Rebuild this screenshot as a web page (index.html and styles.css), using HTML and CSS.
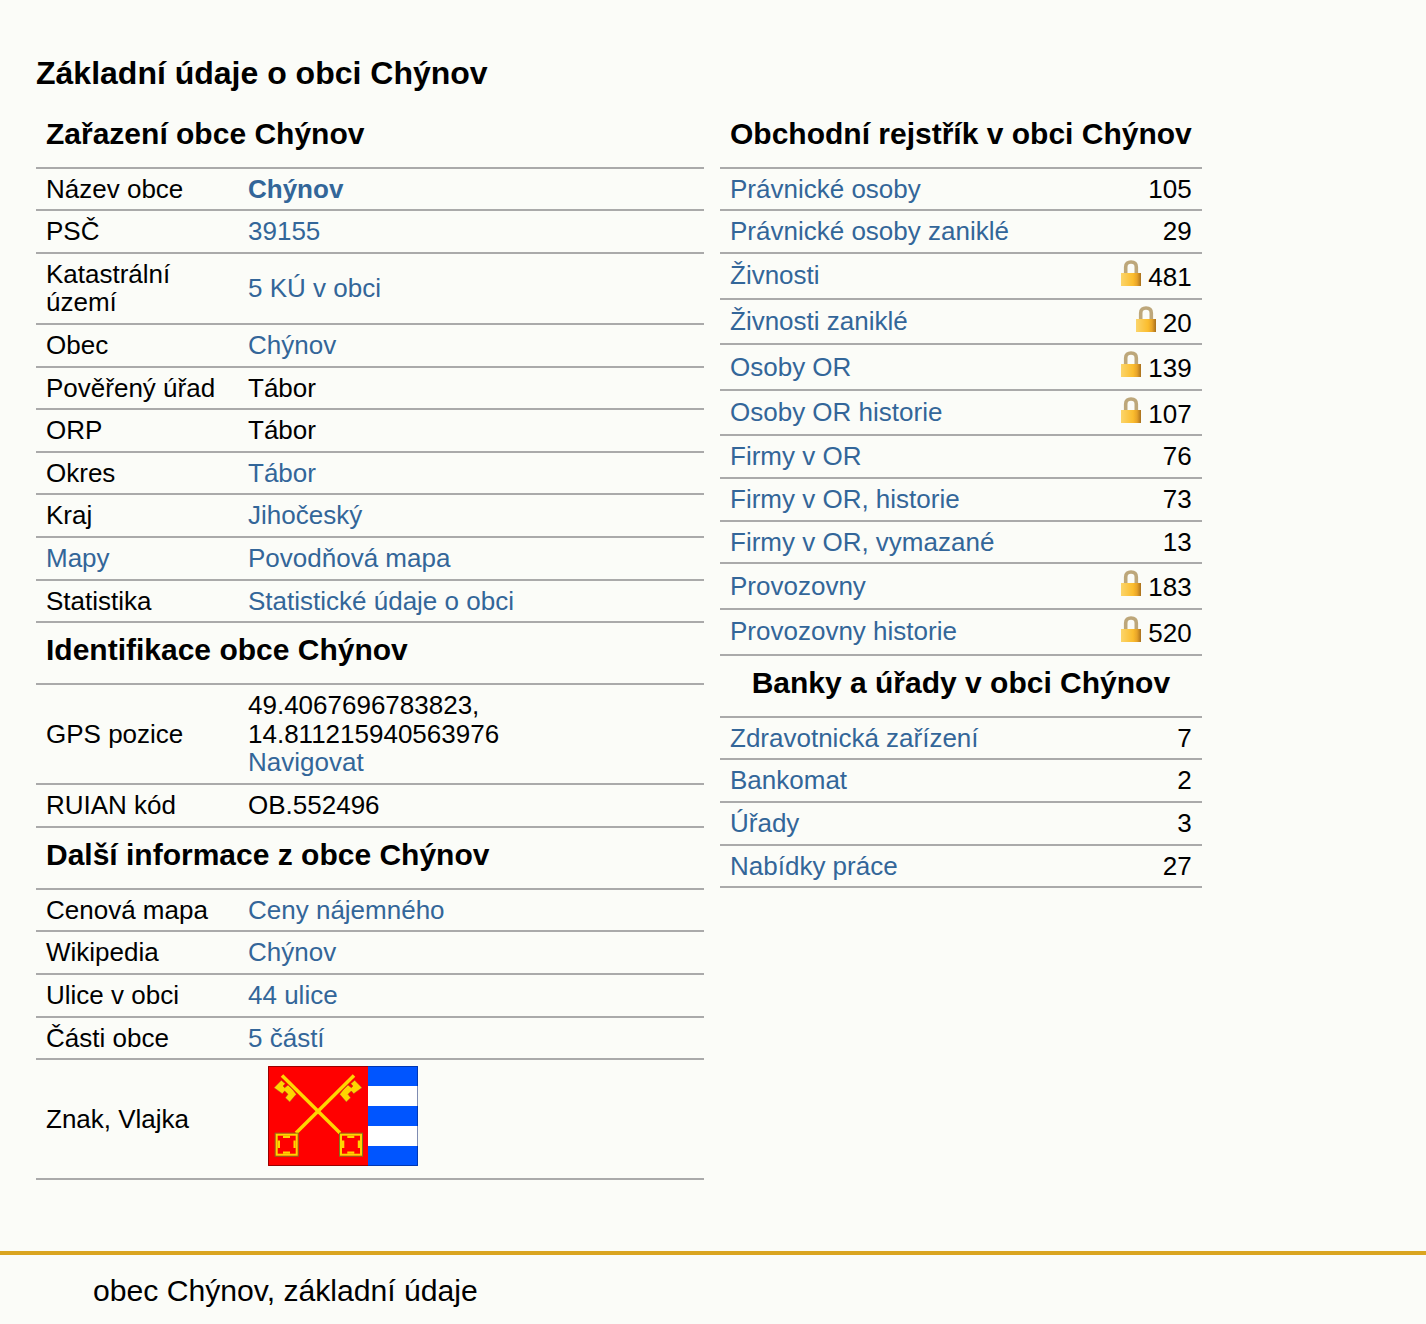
FILE: index.html
```html
<!DOCTYPE html>
<html lang="cs">
<head>
<meta charset="utf-8">
<title>Základní údaje o obci Chýnov</title>
<link rel="stylesheet" href="styles.css">
</head>
<body>
<main class="content">
<h1 class="page-title">Základní údaje o obci Chýnov</h1>
<div class="columns">
<table class="info left">
<tbody>
<tr class="head"><th colspan="2"><h2>Zařazení obce Chýnov</h2></th></tr>
<tr><td class="label">Název obce</td><td><a href="#"><b>Chýnov</b></a></td></tr>
<tr><td class="label">PSČ</td><td><a href="#">39155</a></td></tr>
<tr><td class="label">Katastrální území</td><td><a href="#">5 KÚ v obci</a></td></tr>
<tr><td class="label">Obec</td><td><a href="#">Chýnov</a></td></tr>
<tr><td class="label">Pověřený úřad</td><td>Tábor</td></tr>
<tr><td class="label">ORP</td><td>Tábor</td></tr>
<tr><td class="label">Okres</td><td><a href="#">Tábor</a></td></tr>
<tr><td class="label">Kraj</td><td><a href="#">Jihočeský</a></td></tr>
<tr><td class="label"><a href="#">Mapy</a></td><td><a href="#">Povodňová mapa</a></td></tr>
<tr><td class="label">Statistika</td><td><a href="#">Statistické údaje o obci</a></td></tr>
<tr class="head"><th colspan="2"><h2>Identifikace obce Chýnov</h2></th></tr>
<tr><td class="label">GPS pozice</td><td>49.4067696783823,<br>14.811215940563976<br><a href="#">Navigovat</a></td></tr>
<tr><td class="label">RUIAN kód</td><td>OB.552496</td></tr>
<tr class="head"><th colspan="2"><h2>Další informace z obce Chýnov</h2></th></tr>
<tr><td class="label">Cenová mapa</td><td><a href="#">Ceny nájemného</a></td></tr>
<tr><td class="label">Wikipedia</td><td><a href="#">Chýnov</a></td></tr>
<tr><td class="label">Ulice v obci</td><td><a href="#">44 ulice</a></td></tr>
<tr><td class="label">Části obce</td><td><a href="#">5 částí</a></td></tr>
<tr><td class="label">Znak, Vlajka</td><td class="symbols">
<svg class="symbol" width="150" height="100" viewBox="0 0 150 100" role="img" aria-label="Znak a vlajka">
<defs>
<path id="key-bit" d="M6 21.700 L13.300 14.300 L17.300 17.700 L15 20 L16.700 21.700 L20 19 L25 24 L28.300 28.300 L21.700 36 L17.300 31.700 L20 28.300 L16.700 25 L14.300 27.700Z"/>
<g id="key-bow">
<rect x="7.200" y="67.200" width="23" height="23" fill="none" stroke="#7c7a1c" stroke-width="1"/>
<rect x="8.700" y="68.700" width="20" height="20" fill="none" stroke="#ffd500" stroke-width="2"/>
<path d="M15 69.700 H22 V72 H15Z M15 85.500 H22 V87.700 H15Z M9.700 74.500 H12 V82 H9.700Z M25.500 74.500 H27.700 V82 H25.500Z" fill="#ffd500"/>
</g>
</defs>
<rect width="100" height="100" fill="#ff0000"/>
<rect x="100" width="50" height="100" fill="#0055ff"/>
<rect x="100" y="20" width="50" height="20" fill="#fff"/>
<rect x="100" y="60" width="50" height="20" fill="#fff"/>
<path d="M100 .5 H.5 V99.500 H100" fill="none" stroke="#900"/>
<path d="M100 .5 H149.500 V99.500 H100" fill="none" stroke="#001a66" stroke-opacity=".5"/>
<g fill="none" stroke="#ffd500" stroke-width="3.500">
<path d="M14 9.500 L72 67"/><path d="M86 9.500 L28 67"/>
</g>
<use href="#key-bit" fill="#ffd500" stroke="#a33" stroke-width=".5"/>
<use href="#key-bit" transform="matrix(-1 0 0 1 100 0)" fill="#ffd500" stroke="#a33" stroke-width=".5"/>
<use href="#key-bow"/>
<use href="#key-bow" x="64.300"/>
</svg>
</td></tr>
</tbody>
</table>
<table class="info right">
<tbody>
<tr class="head"><th colspan="2"><h2>Obchodní rejstřík v obci Chýnov</h2></th></tr>
<tr><td><a href="#">Právnické osoby</a></td><td class="num">105</td></tr>
<tr><td><a href="#">Právnické osoby zaniklé</a></td><td class="num">29</td></tr>
<tr><td><a href="#">Živnosti</a></td><td class="num"><svg class="lock" viewBox="0 0 20 26" width="20" height="26"><use href="#lock-icon"/></svg> 481</td></tr>
<tr><td><a href="#">Živnosti zaniklé</a></td><td class="num"><svg class="lock" viewBox="0 0 20 26" width="20" height="26"><use href="#lock-icon"/></svg> 20</td></tr>
<tr><td><a href="#">Osoby OR</a></td><td class="num"><svg class="lock" viewBox="0 0 20 26" width="20" height="26"><use href="#lock-icon"/></svg> 139</td></tr>
<tr><td><a href="#">Osoby OR historie</a></td><td class="num"><svg class="lock" viewBox="0 0 20 26" width="20" height="26"><use href="#lock-icon"/></svg> 107</td></tr>
<tr><td><a href="#">Firmy v OR</a></td><td class="num">76</td></tr>
<tr><td><a href="#">Firmy v OR, historie</a></td><td class="num">73</td></tr>
<tr><td><a href="#">Firmy v OR, vymazané</a></td><td class="num">13</td></tr>
<tr><td><a href="#">Provozovny</a></td><td class="num"><svg class="lock" viewBox="0 0 20 26" width="20" height="26"><use href="#lock-icon"/></svg> 183</td></tr>
<tr><td><a href="#">Provozovny historie</a></td><td class="num"><svg class="lock" viewBox="0 0 20 26" width="20" height="26"><use href="#lock-icon"/></svg> 520</td></tr>
<tr class="head center"><th colspan="2"><h2>Banky a úřady v obci Chýnov</h2></th></tr>
<tr><td><a href="#">Zdravotnická zařízení</a></td><td class="num">7</td></tr>
<tr><td><a href="#">Bankomat</a></td><td class="num">2</td></tr>
<tr><td><a href="#">Úřady</a></td><td class="num">3</td></tr>
<tr><td><a href="#">Nabídky práce</a></td><td class="num">27</td></tr>
</tbody>
</table>
</div>
</main>
<footer class="footer">obec Chýnov, základní údaje</footer>
<svg class="defs" width="0" height="0" aria-hidden="true">
<defs>
<linearGradient id="lock-body" x1="0" x2="1" y1="0" y2="0">
<stop offset="0" stop-color="#fbd56b"/><stop offset=".6" stop-color="#fbbd2e"/><stop offset=".8" stop-color="#e8a428"/><stop offset="1" stop-color="#a8701e"/>
</linearGradient>
<symbol id="lock-icon" viewBox="0 0 20 26">
<path d="M4.700 14 V7 C4.700 3.500 7 2 10 2 S15.300 3.500 15.300 7 V14" fill="none" stroke="#bda77a" stroke-width="3.600"/>
<rect x="0" y="13" width="20" height="13" fill="url(#lock-body)"/>
</symbol>
</defs>
</svg>
</body>
</html>
```
FILE: styles.css
```css
* { box-sizing: border-box; }
html, body { margin: 0; padding: 0; }
body {
  background: #fbfcf8;
  color: #000;
  font-family: "Liberation Sans", Arial, sans-serif;
  font-size: 26px;
  line-height: 28.500px;
}
a { color: #336699; text-decoration: none; }
.content { padding: 0 36px; height: 1251px; overflow: hidden; }
.page-title { margin: 0; padding-top: 55px; font-size: 32px; line-height: 37px; font-weight: 700; }
.columns { display: flex; align-items: flex-start; gap: 16px; padding-top: 14.550px; }
.info { border-collapse: collapse; }
.info td { border-bottom: 2px solid #aaa; padding: 6px 10px 6.100px; vertical-align: middle; }
.info th { border-bottom: 2px solid #aaa; padding: 10px 10px 16.200px; text-align: left; }
.info h2 { margin: 0; font-size: 30px; line-height: 34px; font-weight: 700; white-space: nowrap; }
.left { width: 668px; }
.label { width: 202px; }
.head.center th { text-align: center; }
.num { text-align: right; white-space: nowrap; }
.lock { vertical-align: 0.060px; }
.info .symbols { padding: 6px 30px 12px; }
.symbol { display: block; }
.footer {
  border-top: 4px solid #daa520;
  height: 73px;
  padding: 19px 93px;
  font-size: 30.150px;
  line-height: 34px;
}
.defs { position: absolute; }
```
